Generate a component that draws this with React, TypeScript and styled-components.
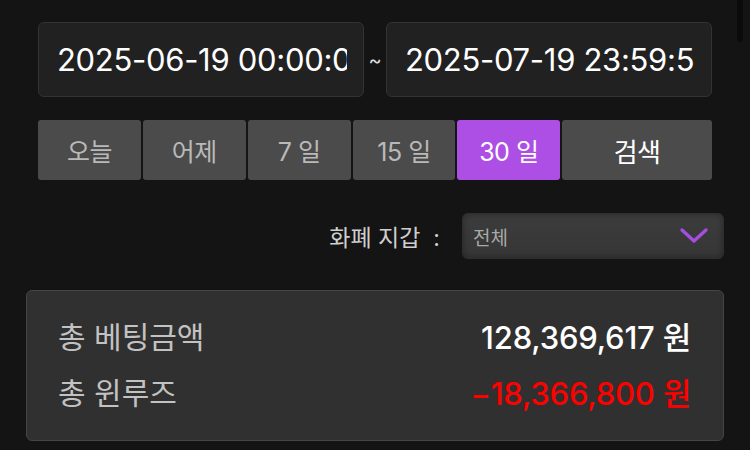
import React, {useState} from "react";
import styled, {createGlobalStyle} from "styled-components";

const GlobalStyle = createGlobalStyle`
    html, body {
        margin: 0;
        padding: 0;
        background: #141414;
        font-family: "Inter", "Noto Sans CJK KR", sans-serif;
        overflow: hidden;
    }
`;

const Page = styled.div`
    position: relative;
    width: 750px;
    height: 450px;
    padding: 22px 26px 0 26px;
    box-sizing: border-box;
    display: flex;
    flex-direction: column;
`;

const ScrollThumb = styled.div`
    position: absolute;
    top: -6px;
    right: 7px;
    width: 6px;
    height: 48px;
    border-radius: 3px;
    background: #0b0b0b;
`;

const DateRow = styled.div`
    display: flex;
    align-items: center;
    padding: 0 12px;
`;

const DateInput = styled.input`
    width: 326px;
    height: 75px;
    box-sizing: border-box;
    padding: 0 16px 0 18px;
    background: #212121;
    border: 1px solid #333;
    border-radius: 6px;
    color: #fff;
    font-family: "Inter", "Noto Sans CJK KR", sans-serif;
    font-size: 31px;
    letter-spacing: -0.3px;
    outline: none;
`;

const Tilde = styled.span`
    width: 22px;
    text-align: center;
    color: #ddd;
    font-size: 20px;
`;

const ButtonRow = styled.div`
    display: flex;
    gap: 2px;
    margin-top: 23px;
    padding: 0 12px;
`;

const PeriodButton = styled.button<{ $active?: boolean; $wide?: boolean }>`
    width: ${p => (p.$wide ? "150px" : "103px")};
    height: 60px;
    border: none;
    border-radius: 3px;
    background: ${p => (p.$active ? "#ad4fe4" : "#4b4b4b")};
    color: ${p => (p.$active || p.$wide ? "#fff" : "#b9b9b9")};
    font-family: "Inter", "Noto Sans CJK KR", sans-serif;
    font-size: ${p => (p.$wide ? "26px" : "25px")};
    letter-spacing: -0.5px;
    padding: 0;
`;

const WalletRow = styled.div`
    display: flex;
    justify-content: flex-end;
    align-items: center;
    margin-top: 33px;
`;

const WalletLabel = styled.span`
    color: #cfcfcf;
    font-size: 23px;
    margin-right: 22px;
    white-space: pre;
`;

const Select = styled.div`
    width: 262px;
    height: 46px;
    box-sizing: border-box;
    display: flex;
    align-items: center;
    justify-content: space-between;
    padding: 0 14px 0 10px;
    background: linear-gradient(#3c3c3c, #363636);
    border: 1px solid #2e2e2e;
    border-radius: 6px;
    box-shadow: inset 0 0 6px rgba(0, 0, 0, 0.35);
    color: #a9a9a9;
    font-size: 19px;
`;

const SummaryCard = styled.div`
    margin-top: 31px;
    height: 151px;
    box-sizing: border-box;
    background: #303030;
    border: 1px solid #454545;
    border-radius: 6px;
    padding: 23px 32px 0 31px;
    display: flex;
    flex-direction: column;
    gap: 14px;
`;

const SummaryLine = styled.div`
    display: flex;
    justify-content: space-between;
    align-items: center;
    height: 42px;
`;

const SummaryLabel = styled.span`
    color: #c2c2c2;
    font-size: 30px;
`;

const SummaryValue = styled.span<{ $negative?: boolean }>`
    color: ${p => (p.$negative ? "#ff0000" : "#fff")};
    font-size: 31px;
    font-weight: 500;
    letter-spacing: -0.2px;
`;

const periods = ["오늘", "어제", "7 일", "15 일", "30 일"];

const Chevron = () => (
    <svg width="30" height="18" viewBox="0 0 30 18" fill="none">
        <path d="M3 3 L15 14 L27 3" stroke="#a44ee0" strokeWidth="3.4" strokeLinecap="round" strokeLinejoin="round"/>
    </svg>
);

const App: React.FC = () => {
    const [active, setActive] = useState("30 일");

    return (
        <Page>
            <GlobalStyle/>
            <ScrollThumb/>
            <DateRow>
                <DateInput readOnly value="2025-06-19 00:00:00"/>
                <Tilde>~</Tilde>
                <DateInput readOnly value="2025-07-19 23:59:59"/>
            </DateRow>
            <ButtonRow>
                {periods.map((p) => (
                    <PeriodButton key={p} $active={active === p} onClick={() => setActive(p)}>{p}</PeriodButton>
                ))}
                <PeriodButton $wide>검색</PeriodButton>
            </ButtonRow>
            <WalletRow>
                <WalletLabel>{"화폐 지갑  :"}</WalletLabel>
                <Select>
                    <span>전체</span>
                    <Chevron/>
                </Select>
            </WalletRow>
            <SummaryCard>
                <SummaryLine>
                    <SummaryLabel>총 베팅금액</SummaryLabel>
                    <SummaryValue>128,369,617 원</SummaryValue>
                </SummaryLine>
                <SummaryLine>
                    <SummaryLabel>총 윈루즈</SummaryLabel>
                    <SummaryValue $negative>−18,366,800 원</SummaryValue>
                </SummaryLine>
            </SummaryCard>
        </Page>
    );
}

export default App;
